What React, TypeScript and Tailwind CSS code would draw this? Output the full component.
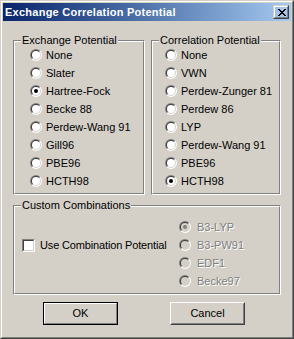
import React from "react";

const X_PATTERN = [
  "XX....XX",
  ".XX..XX.",
  "..XXXX..",
  "...XX...",
  "..XXXX..",
  ".XX..XX.",
  "XX....XX",
];

function CloseGlyph() {
  const rects: React.ReactElement[] = [];
  X_PATTERN.forEach((row, y) =>
    row.split("").forEach((c, x) => {
      if (c === "X") rects.push(<rect key={`${x}-${y}`} x={x} y={y} width={1} height={1} fill="#000" />);
    })
  );
  return (
    <svg width="8" height="7" viewBox="0 0 8 7" shapeRendering="crispEdges">
      {rects}
    </svg>
  );
}

function Radio({ checked, disabled }: { checked?: boolean; disabled?: boolean }) {
  const fill = disabled ? "#d4d0c8" : "#ffffff";
  const dot = disabled ? "#808080" : "#000000";
  return (
    <svg width="12" height="12" viewBox="0 0 12 12" className="shrink-0">
      <path d="M1.757 10.243A6 6 0 0 1 10.243 1.757Z" fill="#808080" />
      <path d="M10.243 1.757A6 6 0 0 1 1.757 10.243Z" fill="#ffffff" />
      <path d="M2.464 9.536A5 5 0 0 1 9.536 2.464Z" fill="#404040" />
      <path d="M9.536 2.464A5 5 0 0 1 2.464 9.536Z" fill="#d4d0c8" />
      <circle cx="6" cy="6" r="4" fill={fill} />
      {checked && <circle cx="6" cy="6" r="2" fill={dot} />}
    </svg>
  );
}

function RadioRow({
  label,
  checked,
  disabled,
  gap = "gap-[4px]",
}: {
  label: string;
  checked?: boolean;
  disabled?: boolean;
  gap?: string;
}) {
  return (
    <div className={`flex h-[18px] items-center ${gap}`}>
      <Radio checked={checked} disabled={disabled} />
      <span
        className={
          disabled
            ? "leading-[13px] text-[#808080] [text-shadow:1px_1px_0_#ffffff]"
            : "leading-[13px] text-black"
        }
      >
        {label}
      </span>
    </div>
  );
}

function Group({
  label,
  className,
  children,
}: {
  label: string;
  className: string;
  children: React.ReactNode;
}) {
  return (
    <div
      className={`relative shrink-0 border border-t-[#808080] border-l-[#808080] border-r-white border-b-white ${className}`}
    >
      <div className="h-full w-full border border-t-white border-l-white border-r-[#808080] border-b-[#808080]">
        {children}
      </div>
      <div className="absolute left-[7px] top-[-7px] bg-[#d4d0c8] px-[1px] leading-[13px] text-black">
        {label}
      </div>
    </div>
  );
}

function Button({ label, isDefault }: { label: string; isDefault?: boolean }) {
  if (isDefault) {
    return (
      <div className="h-[23px] w-[75px] shrink-0 border border-black">
        <div className="flex h-full w-full items-center justify-center border border-t-white border-l-white border-r-[#808080] border-b-[#808080] leading-[13px]">
          {label}
        </div>
      </div>
    );
  }
  return (
    <div className="h-[23px] w-[75px] shrink-0 border border-t-white border-l-white border-r-[#404040] border-b-[#404040]">
      <div className="flex h-full w-full items-center justify-center border border-t-[#d4d0c8] border-l-[#d4d0c8] border-r-[#808080] border-b-[#808080] leading-[13px]">
        {label}
      </div>
    </div>
  );
}

export default function App() {
  return (
    <div className="h-[339px] w-[294px] bg-[#d4d0c8] font-['Liberation_Sans',Arial,sans-serif] text-[11px] text-black">
      <div className="h-full w-full border border-t-[#d4d0c8] border-l-[#d4d0c8] border-r-[#404040] border-b-[#404040]">
        <div className="flex h-full w-full flex-col border border-t-white border-l-white border-r-[#808080] border-b-[#808080] p-px">
          {/* Title bar */}
          <div className="flex h-[18px] shrink-0 items-center justify-between bg-gradient-to-r from-[#0a246a] to-[#a6caf0] pl-[2px] pr-[2px]">
            <span className="text-[11px] font-bold leading-[13px] tracking-[0.25px] text-white">
              Exchange Correlation Potential
            </span>
            <div className="h-[14px] w-[16px] border border-t-[#d4d0c8] border-l-[#d4d0c8] border-r-[#404040] border-b-[#404040]">
              <div className="flex h-full w-full items-center justify-center border border-t-white border-l-white border-r-[#808080] border-b-[#808080] pl-[1px]">
                <CloseGlyph />
              </div>
            </div>
          </div>

          {/* Content */}
          <div className="flex flex-col pl-[10px] pt-[19px]">
            <div className="flex gap-[6px]">
              <Group label="Exchange Potential" className="h-[155px] w-[132px]">
                <div className="flex flex-col pl-[15px] pt-[4px]">
                  <RadioRow label="None" />
                  <RadioRow label="Slater" />
                  <RadioRow label="Hartree-Fock" checked />
                  <RadioRow label="Becke 88" />
                  <RadioRow label="Perdew-Wang 91" />
                  <RadioRow label="Gill96" />
                  <RadioRow label="PBE96" />
                  <RadioRow label="HCTH98" />
                </div>
              </Group>
              <Group label="Correlation Potential" className="h-[155px] w-[130px]">
                <div className="flex flex-col pl-[12px] pt-[4px]">
                  <RadioRow label="None" />
                  <RadioRow label="VWN" />
                  <RadioRow label="Perdew-Zunger 81" />
                  <RadioRow label="Perdew 86" />
                  <RadioRow label="LYP" />
                  <RadioRow label="Perdew-Wang 91" />
                  <RadioRow label="PBE96" />
                  <RadioRow label="HCTH98" checked />
                </div>
              </Group>
            </div>

            <Group label="Custom Combinations" className="mt-[10px] h-[90px] w-[268px]">
              <div className="flex pt-[11px]">
                <div className="w-[164px] shrink-0 pl-[7px] pt-[18px]">
                  <div className="flex h-[18px] items-center gap-[5px]">
                    <div className="h-[13px] w-[13px] shrink-0 border border-t-[#808080] border-l-[#808080] border-r-white border-b-white">
                      <div className="h-full w-full border border-t-[#404040] border-l-[#404040] border-r-[#d4d0c8] border-b-[#d4d0c8] bg-white" />
                    </div>
                    <span className="leading-[13px] tracking-[-0.15px]">Use Combination Potential</span>
                  </div>
                </div>
                <div className="flex flex-col">
                  <RadioRow label="B3-LYP" checked disabled gap="gap-[6px]" />
                  <RadioRow label="B3-PW91" disabled gap="gap-[6px]" />
                  <RadioRow label="EDF1" disabled gap="gap-[6px]" />
                  <RadioRow label="Becke97" disabled gap="gap-[6px]" />
                </div>
              </div>
            </Group>

            <div className="mt-[7px] flex">
              <div className="ml-[30px]">
                <Button label="OK" isDefault />
              </div>
              <div className="ml-[52px]">
                <Button label="Cancel" />
              </div>
            </div>
          </div>
        </div>
      </div>
    </div>
  );
}
